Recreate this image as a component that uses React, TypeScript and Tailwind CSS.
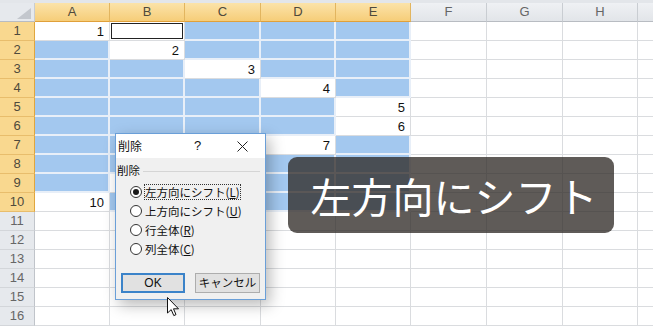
import React from "react";

const cols = [
  { key: "A", width: "w-[75px]", sel: true },
  { key: "B", width: "w-[75px]", sel: true },
  { key: "C", width: "w-[76px]", sel: true },
  { key: "D", width: "w-[75px]", sel: true },
  { key: "E", width: "w-[75px]", sel: true },
  { key: "F", width: "w-[76px]", sel: false },
  { key: "G", width: "w-[76px]", sel: false },
  { key: "H", width: "w-[75px]", sel: false },
  { key: "", width: "w-[75px]", sel: false },
];

// column index holding the value of each row (diagonal 1..10)
const valueCol: Record<number, number> = { 1: 0, 2: 1, 3: 2, 4: 3, 5: 4, 6: 4, 7: 3, 8: 2, 9: 1, 10: 0 };

const rows = Array.from({ length: 16 }, (_, i) => i + 1);

export default function App() {
  return (
    <div className="relative h-[328px] w-[653px] overflow-hidden bg-white font-['Liberation_Sans',sans-serif]">
      <div className="h-[3px] bg-[#e3e6ea]" />

      {/* column headers */}
      <div className="flex h-[19px]">
        <div className="flex w-[35px] shrink-0 items-end justify-end border-r border-b border-r-[#c8ccd1] border-b-[#b8bcc2] bg-[#e6e9ed] pr-[3px] pb-[2px]">
          <svg width="14" height="11" viewBox="0 0 14 11">
            <polygon points="14,0 14,11 0,11" fill="#c3c7cd" />
          </svg>
        </div>
        {cols.map((c, i) => (
          <div
            key={i}
            className={
              c.sel
                ? `${c.width} flex shrink-0 items-center justify-center border-r border-b border-r-[#e2b55f] border-b-[#e0a03a] bg-linear-to-b from-[#fbe3a9] to-[#f6cd78] text-[13px] text-[#4f4a3c]`
                : `${c.width} flex shrink-0 items-center justify-center border-r border-b border-r-[#c9cdd2] border-b-[#b8bcc2] bg-linear-to-b from-[#eff1f4] to-[#e2e5e9] text-[13px] text-[#666]`
            }
          >
            {c.key}
          </div>
        ))}
      </div>

      {/* rows */}
      {rows.map((r) => (
        <div key={r} className="flex h-[19px]">
          <div
            className={
              r <= 10
                ? "flex w-[35px] shrink-0 items-center justify-center border-r border-b border-r-[#e0a63e] border-b-[#e8bd6c] bg-[#f9d88f] text-[13px] text-[#4f4a3c]"
                : "flex w-[35px] shrink-0 items-center justify-center border-r border-b border-r-[#c0c4ca] border-b-[#d3d6da] bg-[#e6e9ed] text-[13px] text-[#666]"
            }
          >
            {r}
          </div>
          {cols.map((_, ci) => (
            <Cell key={ci} row={r} col={ci} />
          ))}
        </div>
      ))}

      {/* delete dialog */}
      <div className="absolute top-[133px] left-[115px] flex h-[167px] w-[151px] flex-col border border-[#6a9fd8] bg-[#f0f0f0] font-['Noto_Sans_CJK_JP',sans-serif] text-[#111] shadow-[4px_5px_14px_rgba(0,0,0,0.28)]">
        <div className="flex h-[24px] items-center bg-white text-[12px]">
          <span className="ml-[2px] w-[76px]">削除</span>
          <span className="w-[43px] font-['Liberation_Sans',sans-serif] text-[13px]">?</span>
          <svg width="11" height="11" viewBox="0 0 11 11">
            <path d="M0.5 0.5 L10.5 10.5 M10.5 0.5 L0.5 10.5" stroke="#222" strokeWidth="1" />
          </svg>
        </div>

        <div className="flex flex-1 flex-col pt-[5px]">
          <div className="flex h-[16px] items-center pl-[1px] text-[11.5px]">
            <span>削除</span>
            <div className="ml-[3px] mr-[5px] h-px flex-1 bg-[#d5d5d5]" />
          </div>

          <div className="mt-[3px] flex flex-col pl-[14px] text-[11.5px]">
            <Radio checked label="左方向にシフト" accel="L" focus />
            <Radio label="上方向にシフト" accel="U" />
            <Radio label="行全体" accel="R" />
            <Radio label="列全体" accel="C" />
          </div>

          <div className="mt-[15px] flex gap-[10px] pl-[5px] text-[11.5px]">
            <div className="flex h-[20px] w-[64px] items-center justify-center border-2 border-[#3b83c9] bg-[#e1e1e1] font-['Liberation_Sans',sans-serif] text-[12px]">
              OK
            </div>
            <div className="flex h-[20px] w-[65px] items-center justify-center border border-[#adadad] bg-[#e1e1e1]">
              キャンセル
            </div>
          </div>
        </div>
      </div>

      {/* caption overlay */}
      <div className="absolute top-[157px] left-[288px] flex h-[76px] w-[326px] items-center justify-center rounded-[9px] bg-[rgba(45,40,36,0.76)] pl-[6px] font-['Noto_Sans_CJK_JP',sans-serif] text-[41px] leading-none text-white">
        左方向にシフト
      </div>

      {/* mouse pointer */}
      <svg className="absolute top-[297px] left-[167px]" width="13" height="20" viewBox="0 0 13 20">
        <path
          d="M0.5 0.5 L0.5 16 L4.2 12.6 L6.8 18.6 L9 17.6 L6.5 11.8 L11.5 11.8 Z"
          fill="#fff"
          stroke="#111"
          strokeWidth="1"
          strokeLinejoin="round"
        />
      </svg>
    </div>
  );
}

function Cell({ row, col }: { row: number; col: number }) {
  const c = cols[col];
  const value = valueCol[row] === col ? row : null;
  const active = row === 1 && col === 1;
  const blue = row <= 10 && col <= 4 && value === null && !active;

  if (blue) {
    return <div className={`${c.width} shrink-0 border-r-2 border-b-2 border-[#e8eff8] bg-[#a3c8ef]`} />;
  }
  if (active) {
    return (
      <div className={`${c.width} flex shrink-0 border-r border-b border-[#dadcdf] bg-white p-[1px]`}>
        <div className="flex-1 border-[1.5px] border-[#222]" />
      </div>
    );
  }
  return (
    <div
      className={`${c.width} flex shrink-0 items-center justify-end border-r border-b border-[#dadcdf] bg-white pt-[1px] pr-[5px] text-[13px] text-[#111]`}
    >
      {value}
    </div>
  );
}

function Radio({ label, accel, checked, focus }: { label: string; accel: string; checked?: boolean; focus?: boolean }) {
  return (
    <div className="flex h-[19px] items-center">
      <span className="flex h-[12px] w-[12px] shrink-0 items-center justify-center rounded-full border border-[#333] bg-white">
        {checked && <span className="h-[6px] w-[6px] rounded-full bg-[#1a1a1a]" />}
      </span>
      <span className={focus ? "ml-[2px] border border-dotted border-[#333] leading-[14px]" : "ml-[3px] leading-[14px]"}>
        {label}(<span className="underline">{accel}</span>)
      </span>
    </div>
  );
}
